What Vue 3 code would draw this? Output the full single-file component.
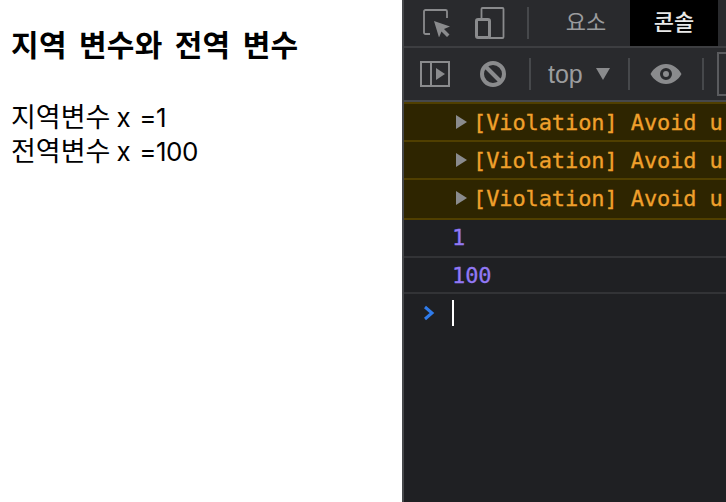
<script setup>
const violations = [1, 2, 3]
const values = ['1', '100']
</script>

<template>
  <div class="page">
    <main class="doc">
      <h1>지역 변수와 전역 변수</h1>
      <p>지역변수 <span class="latin">x =1</span></p>
      <p>전역변수 <span class="latin">x =100</span></p>
    </main>
    <aside class="devtools">
      <div class="tabs">
        <div class="tool-icons">
          <svg width="28" height="28" viewBox="0 0 28 28" fill="none">
            <path d="M7 25H2.500A1.500 1.500 0 0 1 1 23.500V2.500A1.500 1.500 0 0 1 2.500 1h20A1.500 1.500 0 0 1 24 2.500V9" stroke="#8a8b8d" stroke-width="1.800"/>
            <path d="M11 12l16 5.500-6 2.500 5.500 5.500-2.500 2.500-5.500-5.500-2.500 6z" fill="#8a8b8d"/>
          </svg>
          <svg width="30" height="32" viewBox="0 0 30 32" fill="none">
            <path d="M6.500 11V2a1 1 0 0 1 1-1h20a1 1 0 0 1 1 1v28a1 1 0 0 1-1 1H14" stroke="#8a8b8d" stroke-width="1.800"/>
            <rect x="1.500" y="12.500" width="13" height="18" rx="1.500" stroke="#8a8b8d" stroke-width="3"/>
          </svg>
        </div>
        <span class="sep tall"></span>
        <span class="tab">요소</span>
        <span class="tab active">콘솔</span>
      </div>
      <div class="toolbar">
        <svg class="t-side" width="30" height="26" viewBox="0 0 30 26" fill="none">
          <rect x="1" y="1" width="28" height="24" stroke="#8a8b8d" stroke-width="2"/>
          <path d="M11 1v24" stroke="#8a8b8d" stroke-width="2"/>
          <path d="M16 7l9 6-9 6z" fill="#8a8b8d"/>
        </svg>
        <svg class="t-clear" width="28" height="28" viewBox="0 0 28 28" fill="none">
          <circle cx="14" cy="14" r="11" stroke="#8a8b8d" stroke-width="4"/>
          <path d="M6 6l16 16" stroke="#8a8b8d" stroke-width="4"/>
        </svg>
        <span class="sep short"></span>
        <span class="context">top</span>
        <span class="caret"></span>
        <span class="sep short"></span>
        <svg class="t-eye" width="32" height="22" viewBox="0 0 32 22">
          <path fill-rule="evenodd" d="M16 1c7 0 12.500 4.500 15.500 10-3 5.500-8.500 10-15.500 10S3.500 16.500.5 11C3.500 5.500 9 1 16 1zm0 4a6 6 0 1 0 0 12 6 6 0 0 0 0-12zm0 3a3 3 0 1 1 0 6 3 3 0 0 1 0-6z" fill="#8a8b8d"/>
        </svg>
        <span class="sep short"></span>
        <span class="filter"></span>
      </div>
      <div class="log">
        <div v-for="v in violations" :key="v" class="row warn">
          <span class="tri"></span>
          <span class="msg">[Violation] Avoid u</span>
        </div>
        <div v-for="n in values" :key="n" class="row val">{{ n }}</div>
        <div class="prompt">
          <svg class="chev" width="12" height="16" viewBox="0 0 12 16" fill="none">
            <path d="M2 2l7 6-7 6" stroke="#2f7bea" stroke-width="3"/>
          </svg>
          <span class="cursor"></span>
        </div>
      </div>
    </aside>
  </div>
</template>

<style>
html, body { margin: 0; padding: 0; background: #fff; overflow: hidden; }
</style>

<style scoped>
.page {
  display: flex;
  width: 726px;
  height: 502px;
  overflow: hidden;
}
.doc {
  width: 402px;
  flex: none;
  padding: 21px 0 0 11px;
  box-sizing: border-box;
  color: #000;
  font-family: "Noto Sans CJK KR", "Liberation Sans", sans-serif;
}
h1 {
  margin: 0 0 34px;
  font-size: 30px;
  line-height: 44px;
  height: 44px;
  font-weight: 700;
  word-spacing: 5px;
  letter-spacing: 0.3px;
}
p {
  margin: 0;
  font-size: 27px;
  line-height: 34px;
  height: 34px;
  white-space: nowrap;
}
.latin {
  font-family: "Inter", sans-serif;
  font-size: 26px;
  word-spacing: 2px;
  letter-spacing: -0.4px;
  line-height: 34px;
}
.devtools {
  flex: 1;
  min-width: 0;
  border-left: 2px solid #46484b;
  background: #1f2023;
  overflow: hidden;
}
.tabs {
  height: 46px;
  display: flex;
  align-items: center;
  background: #292a2d;
  border-bottom: 2px solid #3d3e41;
  white-space: nowrap;
}
.tool-icons {
  display: flex;
  align-items: center;
  gap: 24px;
  padding-left: 19px;
  height: 46px;
  width: 123px;
  box-sizing: border-box;
  flex: none;
}
.sep {
  display: block;
  width: 2px;
  background: #46484b;
  flex: none;
}
.sep.tall { height: 32px; margin-right: 13px; }
.tab {
  font-family: "Noto Sans CJK KR", sans-serif;
  font-size: 22px;
  color: #9b9c9e;
  width: 88px;
  text-align: center;
  height: 46px;
  line-height: 40px;
  flex: none;
}
.tab.active {
  background: #000;
  color: #e9e9e9;
  font-weight: 500;
}
.toolbar {
  height: 52px;
  display: flex;
  align-items: center;
  background: #292a2d;
  border-bottom: 2px solid #46484b;
  white-space: nowrap;
}
.t-side { margin-left: 16px; flex: none; }
.t-clear { margin-left: 29px; flex: none; }
.sep.short { height: 32px; }
.t-clear + .sep { margin-left: 22px; }
.context {
  font-family: "Liberation Sans", sans-serif;
  font-size: 25px;
  color: #9b9c9e;
  margin-left: 17px;
}
.caret {
  width: 0;
  height: 0;
  border-left: 7px solid transparent;
  border-right: 7px solid transparent;
  border-top: 12px solid #8a8b8d;
  margin-left: 13px;
}
.caret + .sep { margin-left: 18px; }
.t-eye { margin-left: 20px; flex: none; }
.t-eye + .sep { margin-left: 20px; }
.filter {
  width: 40px;
  height: 40px;
  border: 2px solid #5a5b5e;
  margin-left: 13px;
  flex: none;
}
.log {
  font-family: "DejaVu Sans Mono", monospace;
  font-size: 22px;
  letter-spacing: -0.1px;
}
.row {
  box-sizing: border-box;
  white-space: nowrap;
}
.warn {
  display: flex;
  align-items: center;
  height: 38px;
  background: #2e2500;
  color: #f0a02c;
  border-bottom: 2px solid #503f00;
  padding-left: 52px;
}
.warn:first-child {
  height: 40px;
  border-top: 2px solid #503f00;
}
.warn:nth-child(3) { height: 40px; padding-bottom: 2px; }
.msg { -webkit-text-stroke: 0.3px #f0a02c; }
.tri {
  width: 0;
  height: 0;
  border-top: 7px solid transparent;
  border-bottom: 7px solid transparent;
  border-left: 11px solid #8a8b8d;
  margin-right: 6px;
  flex: none;
}
.val {
  color: #9178f5;
  padding-left: 48px;
  height: 38px;
  line-height: 36px;
  border-bottom: 2px solid #323336;
  -webkit-text-stroke: 0.3px #9178f5;
}
.val + .val { height: 36px; line-height: 36px; }
.prompt {
  display: flex;
  align-items: center;
  height: 38px;
  padding-left: 19px;
}
.chev { flex: none; }
.cursor {
  display: block;
  width: 2px;
  height: 26px;
  background: #fff;
  margin-left: 17px;
}
</style>
